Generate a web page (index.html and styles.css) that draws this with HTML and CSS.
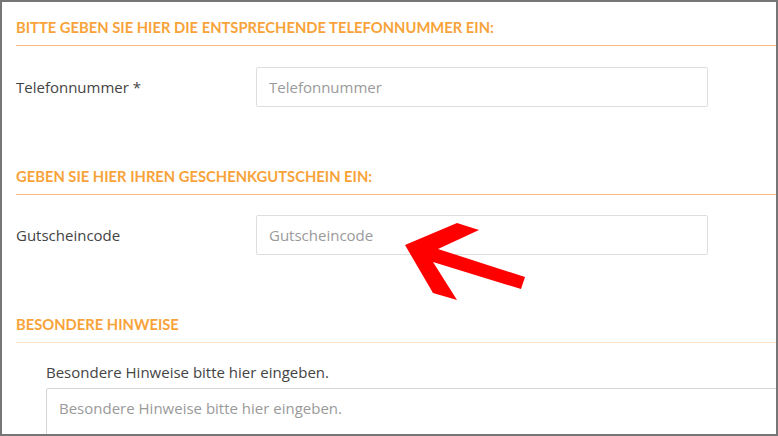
FILE: index.html
```html
<!DOCTYPE html>
<html lang="de">
<head>
<meta charset="utf-8">
<title>Formular</title>
<link rel="stylesheet" href="styles.css">
</head>
<body>
<div class="frame">
  <section class="group">
    <h2 class="group-title first">Bitte geben Sie hier die entsprechende Telefonnummer ein:</h2>
    <div class="row">
      <label class="label" for="tel">Telefonnummer *</label>
      <input class="field" id="tel" type="text" placeholder="Telefonnummer">
    </div>
  </section>
  <section class="group">
    <h2 class="group-title">Geben Sie hier Ihren Geschenkgutschein ein:</h2>
    <div class="row">
      <label class="label" for="code">Gutscheincode</label>
      <input class="field" id="code" type="text" placeholder="Gutscheincode">
    </div>
  </section>
  <section class="group">
    <h2 class="group-title light">Besondere Hinweise</h2>
    <div class="notes">
      <label class="notes-label" for="notes">Besondere Hinweise bitte hier eingeben.</label>
      <textarea class="notes-field" id="notes" placeholder="Besondere Hinweise bitte hier eingeben."></textarea>
    </div>
  </section>
  <svg class="arrow" width="778" height="436" viewBox="0 0 778 436" aria-hidden="true">
    <polygon points="405,245 457,223 479,230 438,249 525,277 521,289 433,262 457,300 433,293" fill="#ff0000"/>
  </svg>
</div>
</body>
</html>
```
FILE: styles.css
```css
html, body {
  margin: 0;
  padding: 0;
  background: #ffffff;
}

.frame {
  position: relative;
  width: 778px;
  height: 436px;
  box-sizing: border-box;
  border: 2px solid #767676;
  padding-left: 14px;
  overflow: hidden;
  font-family: "Open Sans", "Liberation Sans", sans-serif;
  color: #444444;
}

.group-title {
  margin: 59px 0 0 0;
  padding: 0 0 8px 0;
  font-family: Lato, "Liberation Sans", sans-serif;
  font-weight: 700;
  font-size: 14.75px;
  line-height: 20px;
  text-transform: uppercase;
  color: #f8a33a;
  border-bottom: 1px solid #fbba7c;
}

.group-title.first {
  margin-top: 15px;
}

.group-title.light {
  margin-top: 59px;
  border-bottom-color: #fde2c6;
}

.row {
  display: flex;
  align-items: center;
  margin-top: 20px;
}

.group:first-child .row {
  margin-top: 21px;
}

.label {
  width: 240px;
  font-size: 15px;
  line-height: 20px;
}

.field {
  width: 452px;
  height: 40px;
  box-sizing: border-box;
  margin: 0;
  padding: 0 12px;
  border: 1px solid #dedede;
  border-radius: 2px;
  font-family: "Open Sans", "Liberation Sans", sans-serif;
  font-size: 15px;
  color: #444444;
  background: #ffffff;
}

.field::placeholder,
.notes-field::placeholder {
  color: #9a9a9a;
}

.notes {
  padding-left: 30px;
  margin-top: 19px;
}

.notes-label {
  display: block;
  font-size: 15px;
  line-height: 20px;
}

.notes-field {
  display: block;
  width: 760px;
  height: 80px;
  box-sizing: border-box;
  margin-top: 6px;
  padding: 9px 12px;
  border: 1px solid #d6d6d6;
  border-radius: 2px;
  font-family: "Open Sans", "Liberation Sans", sans-serif;
  font-size: 15px;
  resize: none;
}

.arrow {
  position: absolute;
  left: -2px;
  top: -2px;
  pointer-events: none;
}
```
